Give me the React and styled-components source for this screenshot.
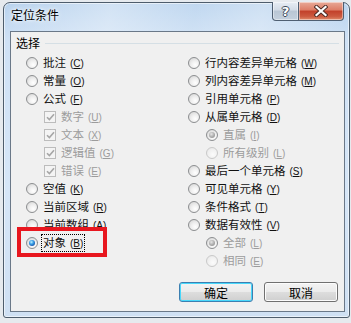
import React from "react";
import styled, { createGlobalStyle } from "styled-components";

const Global = createGlobalStyle`
  html, body { margin: 0; padding: 0; }
  body {
    width: 351px; height: 323px; overflow: hidden;
    background: #e6eaee;
    font-family: "Noto Sans CJK SC", "Liberation Sans", sans-serif;
  }
  #root { width: 351px; height: 323px; }
`;

const Window = styled.div`
  box-sizing: border-box;
  margin: 2px 0 0 3px;
  width: 347px;
  height: 316px;
  border: 1px solid #4e5d6c;
  border-radius: 7px 7px 3px 3px;
  background: linear-gradient(to bottom, #b9d3ee 0%, #cfe1f5 12%, #d6e6f7 60%, #cfe0f3 100%);
  padding: 0 4px 5px 6px;
  display: flex;
  flex-direction: column;
  box-shadow: inset 0 0 0 1px rgba(255, 255, 255, 0.55);
`;

const TitleBar = styled.div`
  height: 28px;
  display: flex;
  align-items: flex-start;
  background: linear-gradient(100deg, rgba(255,255,255,0) 0%, rgba(255,255,255,0.35) 30%, rgba(255,255,255,0.1) 55%, rgba(255,255,255,0.3) 75%, rgba(255,255,255,0) 100%);
`;

const Title = styled.div`
  flex: 1;
  padding: 4px 0 0 1px;
  font-size: 12px;
  line-height: 16px;
  color: #000;
  text-shadow: 0 0 6px #fff, 0 0 3px #fff;
`;

const CaptionGroup = styled.div`
  display: flex;
  margin-top: -1px;
  margin-right: 1px;
`;

const CaptionButton = styled.div`
  box-sizing: border-box;
  width: ${p => p.$w}px;
  height: 19px;
  border: 1px solid #4f5f72;
  border-top: none;
  display: flex;
  align-items: center;
  justify-content: center;
  background: ${p => p.$close
    ? "linear-gradient(to bottom, #e8a997 0%, #dd7d66 45%, #c2402a 50%, #cc5a40 80%, #e08c6c 100%)"
    : "linear-gradient(to bottom, #e7edf4 0%, #d2dbe6 45%, #b9c6d4 50%, #c4d0dd 100%)"};
  border-radius: ${p => p.$close ? "0 0 4px 0" : "0 0 0 4px"};
  ${p => p.$close ? "border-left: none;" : ""}
  box-shadow: inset 0 0 0 1px rgba(255,255,255,0.45);
`;

const HelpGlyph = styled.span`
  font-family: "DejaVu Sans", sans-serif;
  font-weight: bold;
  font-size: 13px;
  line-height: 13px;
  color: #fff;
  text-shadow: -1px 0 #3d4a5a, 1px 0 #3d4a5a, 0 -1px #3d4a5a, 0 1px #3d4a5a;
`;

const Client = styled.div`
  position: relative;
  flex: 1;
  background: #f0f0f0;
  border: 1px solid #6a7888;
  display: flex;
  flex-direction: column;
  padding: 4px 0 0 0;
`;

const GroupHeader = styled.div`
  display: flex;
  align-items: center;
  height: 14px;
  padding: 0 5px 0 5px;
  gap: 5px;
`;

const GroupLabel = styled.span`
  font-size: 12px;
  line-height: 14px;
  color: #000;
`;

const GroupLine = styled.div`
  flex: 1;
  height: 1px;
  background: #d5dfe5;
`;

const Columns = styled.div`
  display: grid;
  grid-template-columns: 162px 1fr;
  padding: 4px 0 0 15px;
`;

const Column = styled.div`
  display: flex;
  flex-direction: column;
`;

const Row = styled.div`
  display: flex;
  align-items: center;
  height: 18px;
  gap: 5px;
  padding-left: ${p => (p.$indent ? 18 : 0)}px;
`;

const RadioCircle = styled.span`
  box-sizing: border-box;
  flex: none;
  width: 12px;
  height: 12px;
  border-radius: 50%;
  border: 1px solid ${p => (p.$disabled ? "#c9c9c9" : "#8c8e90")};
  background: ${p => p.$disabled
    ? "radial-gradient(circle at 60% 65%, #fbfbfb 0%, #efefef 60%, #e2e2e2 100%)"
    : "radial-gradient(circle at 62% 68%, #ffffff 0%, #eeeeee 45%, #cfcfcf 100%)"};
  display: flex;
  align-items: center;
  justify-content: center;
`;

const RadioDot = styled.span`
  width: 6px;
  height: 6px;
  border-radius: 50%;
  background: ${p => p.$disabled
    ? "radial-gradient(circle at 40% 35%, #e6e6e6 0%, #a9a9a9 55%, #8a8a8a 100%)"
    : "radial-gradient(circle at 40% 35%, #c6f1ff 0%, #3fa6ea 35%, #1b60b5 70%, #0d3a78 100%)"};
`;

const CheckBox = styled.span`
  box-sizing: border-box;
  flex: none;
  width: 12px;
  height: 12px;
  border: 1px solid #bcbcbc;
  background: #f4f4f4;
  display: flex;
  align-items: center;
  justify-content: center;
`;

const Label = styled.span`
  font-size: 11.5px;
  line-height: 14px;
  white-space: nowrap;
  color: ${p => (p.$disabled ? "#9c9c9c" : "#111")};
  ${p => p.$focus ? "outline: 1px dotted #000; outline-offset: 0; padding: 0 1px; margin-left: -1px;" : ""}
`;

const Key = styled.span`
  font-family: "Liberation Sans", sans-serif;
  font-size: 10px;
  margin-left: 4px;
`;

const Red = styled.div`
  position: absolute;
  left: 6px;
  top: 195px;
  width: 90px;
  height: 30px;
  box-sizing: border-box;
  border: 4px solid #e8171f;
  pointer-events: none;
`;

const ButtonRow = styled.div`
  display: flex;
  justify-content: flex-end;
  gap: 11px;
  padding: 12px 6px 0 0;
`;

const Button = styled.div`
  box-sizing: border-box;
  width: ${p => p.$w}px;
  height: 20px;
  border: 1px solid ${p => (p.$default ? "#3c7fb1" : "#707070")};
  border-radius: 3px;
  background: linear-gradient(to bottom, #f3f3f3 0%, #ebebeb 48%, #dddddd 52%, #cfcfcf 100%);
  box-shadow: inset 0 0 0 1px ${p => (p.$default ? "#48d8fb" : "#fcfcfc")};
  display: flex;
  align-items: center;
  justify-content: center;
  font-size: 12px;
  color: #000;
`;

function Opt({ label, k, type = "radio", checked, disabled, indent, focus }) {
  return (
    <Row $indent={indent}>
      {type === "radio" ? (
        <RadioCircle $disabled={disabled && !checked}>
          {checked && <RadioDot $disabled={disabled} />}
        </RadioCircle>
      ) : (
        <CheckBox>
          <svg width="9" height="8" viewBox="0 0 9 8">
            <path d="M1 4.2 L3.4 6.6 L8 1.2" fill="none" stroke="#a6a6a6" strokeWidth="1.6" />
          </svg>
        </CheckBox>
      )}
      <Label $disabled={disabled} $focus={focus}>
        {label}
        <Key>(<u>{k}</u>)</Key>
      </Label>
    </Row>
  );
}

export default function App() {
  return (
    <>
      <Global />
      <Window>
        <TitleBar>
          <Title>定位条件</Title>
          <CaptionGroup>
            <CaptionButton $w={27}>
              <HelpGlyph>?</HelpGlyph>
            </CaptionButton>
            <CaptionButton $w={45} $close>
              <svg width="14" height="12" viewBox="0 0 14 12">
                <path d="M2.5 2 L11.5 10 M11.5 2 L2.5 10" stroke="#4a2a24" strokeWidth="4" strokeLinecap="square" />
                <path d="M2.5 2 L11.5 10 M11.5 2 L2.5 10" stroke="#ffffff" strokeWidth="2.2" strokeLinecap="square" />
              </svg>
            </CaptionButton>
          </CaptionGroup>
        </TitleBar>
        <Client>
          <GroupHeader>
            <GroupLabel>选择</GroupLabel>
            <GroupLine />
          </GroupHeader>
          <Columns>
            <Column>
              <Opt label="批注" k="C" />
              <Opt label="常量" k="O" />
              <Opt label="公式" k="F" />
              <Opt label="数字" k="U" type="check" disabled indent />
              <Opt label="文本" k="X" type="check" disabled indent />
              <Opt label="逻辑值" k="G" type="check" disabled indent />
              <Opt label="错误" k="E" type="check" disabled indent />
              <Opt label="空值" k="K" />
              <Opt label="当前区域" k="R" />
              <Opt label="当前数组" k="A" />
              <Opt label="对象" k="B" checked focus />
            </Column>
            <Column>
              <Opt label="行内容差异单元格" k="W" />
              <Opt label="列内容差异单元格" k="M" />
              <Opt label="引用单元格" k="P" />
              <Opt label="从属单元格" k="D" />
              <Opt label="直属" k="I" checked disabled indent />
              <Opt label="所有级别" k="L" disabled indent />
              <Opt label="最后一个单元格" k="S" />
              <Opt label="可见单元格" k="Y" />
              <Opt label="条件格式" k="T" />
              <Opt label="数据有效性" k="V" />
              <Opt label="全部" k="L" checked disabled indent />
              <Opt label="相同" k="E" disabled indent />
            </Column>
          </Columns>
          <ButtonRow>
            <Button $w={74} $default>确定</Button>
            <Button $w={74}>取消</Button>
          </ButtonRow>
          <Red />
        </Client>
      </Window>
    </>
  );
}
